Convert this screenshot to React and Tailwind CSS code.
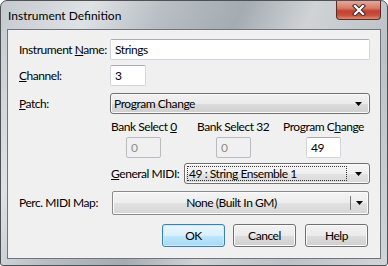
import React from 'react';

// Win7 style "Instrument Definition" dialog

const Arrow = () => (
  <svg width="7" height="4" viewBox="0 0 7 4" className="shrink-0">
    <path d="M0 0h7L3.5 4z" fill="#000" />
  </svg>
);

const TextBox = ({ value, className = '', disabled }) => (
  <div
    className={`h-[21px] shrink-0 flex items-center px-[4px] border rounded-[2px] ${
      disabled
        ? 'bg-[#f0f0f0] border-[#b8bbbf] text-[#8d8d8d]'
        : 'bg-white border-[#d2d5da] border-t-[#abadb3] text-black'
    } ${className}`}
  >
    {value}
  </div>
);

const Button = ({ children, focused, className = '' }) => (
  <div
    className={`h-[23px] w-[63px] flex items-center justify-center rounded-[3px] border ${
      focused
        ? 'border-[#3c7fb1] bg-[linear-gradient(#eaf6fd_0%,#d9f0fc_50%,#bee6fd_51%,#a7d9f5_100%)] shadow-[inset_0_0_0_1px_#c9ecff]'
        : 'border-[#707070] bg-[linear-gradient(#f2f2f2_0%,#ebebeb_50%,#dddddd_51%,#cfcfcf_100%)] shadow-[inset_0_0_0_1px_#fbfbfb]'
    } ${className}`}
  >
    {children}
  </div>
);

export default function App() {
  return (
    <div className="w-[388px] h-[266px] flex flex-col rounded-t-[7px] rounded-b-[3px] border border-[#4d5257] bg-[linear-gradient(115deg,#c4c9ce_0%,#dfe2e5_18%,#b9bfc4_32%,#a4abb1_48%,#cfd3d6_62%,#bcc2c7_80%,#d2d5d8_100%)] text-[12px] leading-[14px] text-black font-['Lato',sans-serif] whitespace-nowrap overflow-hidden">
      {/* title bar */}
      <div className="h-[28px] flex items-start shrink-0">
        <div className="pl-[7px] pt-[7px] text-[12px] leading-[16px]">Instrument Definition</div>
        <div className="ml-auto mr-[6px] h-[19px] w-[45px] rounded-b-[4px] border border-t-0 border-[#5a2a26] bg-[linear-gradient(#e6a796_0%,#d67b6a_40%,#c4402f_55%,#c8503c_80%,#dd8c73_100%)] flex items-center justify-center">
          <svg width="14" height="12" viewBox="0 0 14 12">
            <path d="M3 2l8 8M11 2l-8 8" stroke="#3b2a2a" strokeWidth="4.2" strokeLinecap="square" />
            <path d="M3 2l8 8M11 2l-8 8" stroke="#fff" strokeWidth="2.2" strokeLinecap="square" />
          </svg>
        </div>
      </div>

      {/* client area */}
      <div className="mx-[6px] mb-[6px] flex-1 border border-[#6f757b] bg-[#f0f0f0] flex flex-col pt-[9px] tracking-[-0.45px]">
        <div className="flex items-center h-[21px]">
          <div className="w-[102px] shrink-0 pl-[11px]">
            Instrument <u>N</u>ame:
          </div>
          <TextBox value="Strings" className="w-[260px]" />
        </div>

        <div className="flex items-center h-[21px] mt-[5px]">
          <div className="w-[102px] shrink-0 pl-[11px]">
            <u>C</u>hannel:
          </div>
          <TextBox value="3" className="w-[36px]" />
        </div>

        <div className="flex items-center h-[21px] mt-[7px]">
          <div className="w-[102px] shrink-0 pl-[11px]">
            <u>P</u>atch:
          </div>
          <div className="w-[260px] h-[21px] flex items-center pl-[3px] pr-[7px] rounded-[3px] border border-[#707070] bg-[linear-gradient(#f2f2f2_0%,#ebebeb_50%,#dddddd_51%,#cfcfcf_100%)] shadow-[inset_0_0_0_1px_#fbfbfb]">
            <span className="flex-1">Program Change</span>
            <Arrow />
          </div>
        </div>

        <div className="flex mt-[6px] ml-[103px]">
          <div className="w-[86px] shrink-0">
            Bank Select <u>0</u>
          </div>
          <div className="w-[86px] shrink-0">Bank Select 32</div>
          <div>
            Program C<u>h</u>ange
          </div>
        </div>

        <div className="flex mt-[3px] ml-[118px] gap-[55px]">
          <TextBox value="0" disabled className="w-[35px]" />
          <TextBox value="0" disabled className="w-[35px]" />
          <TextBox value="49" className="w-[35px]" />
        </div>

        <div className="flex items-center h-[21px] mt-[5px] ml-[103px]">
          <div className="w-[73px] shrink-0">
            <u>G</u>eneral MIDI:
          </div>
          <div className="w-[186px] h-[21px] flex items-center pl-[2px] pr-[7px] rounded-[3px] border border-[#707070] bg-[linear-gradient(#f6f6f6_0%,#efefef_50%,#e3e3e3_51%,#d9d9d9_100%)] shadow-[inset_0_0_0_1px_#fbfbfb]">
            <span className="flex-1 h-[15px] leading-[13px] pl-[1px] border border-dotted border-[#333] mr-[8px]">
              49 : String Ensemble 1
            </span>
            <Arrow />
          </div>
        </div>

        <div className="flex items-center h-[24px] mt-[7px]">
          <div className="w-[104px] shrink-0 pl-[11px]">Perc. MIDI Map:</div>
          <div className="w-[257px] h-[24px] flex items-center rounded-[2px] border border-[#8a8a8a] bg-[linear-gradient(#f4f4f4_0%,#ededed_50%,#e1e1e1_51%,#d6d6d6_100%)] shadow-[inset_0_0_0_1px_#fbfbfb]">
            <span className="flex-1 text-center">None (Built In GM)</span>
            <span className="w-px h-[14px] bg-[#7a7a7a]" />
            <span className="w-[17px] flex justify-center">
              <Arrow />
            </span>
          </div>
        </div>

        <div className="flex mt-[9px] ml-[154px] gap-[8px]">
          <Button focused>OK</Button>
          <Button>Cancel</Button>
          <Button className="ml-[1px]">Help</Button>
        </div>
      </div>
    </div>
  );
}
